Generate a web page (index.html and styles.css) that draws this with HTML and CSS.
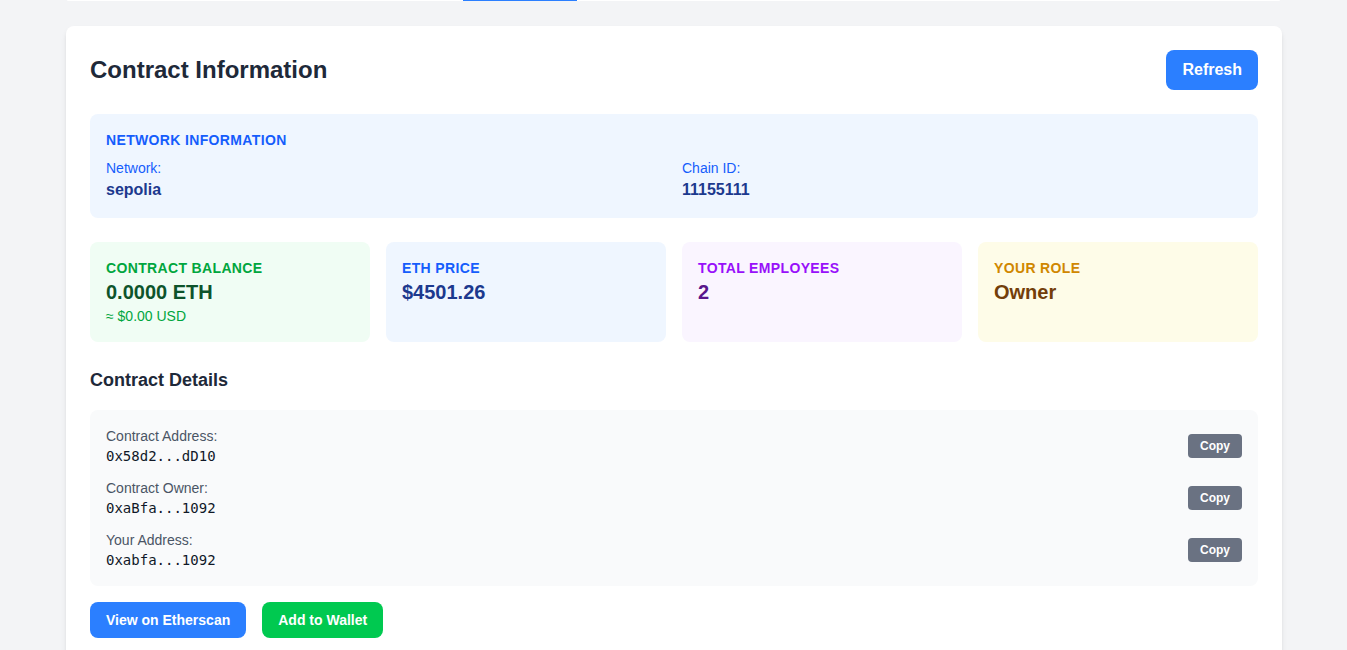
FILE: index.html
```html
<!DOCTYPE html>
<html lang="en">
<head>
<meta charset="utf-8">
<title>Contract Information</title>
<link rel="stylesheet" href="styles.css">
</head>
<body>
<div class="container">
  <div class="nav">
    <div class="nav-spacer"></div>
    <div class="nav-tab-active"></div>
  </div>
  <main class="card">
    <div class="card-header">
      <h1 class="title">Contract Information</h1>
      <button class="btn btn-blue btn-lg">Refresh</button>
    </div>

    <section class="network">
      <div class="network-title">NETWORK INFORMATION</div>
      <div class="network-grid">
        <div>
          <div class="net-label">Network:</div>
          <div class="net-value">sepolia</div>
        </div>
        <div>
          <div class="net-label">Chain ID:</div>
          <div class="net-value">11155111</div>
        </div>
      </div>
    </section>

    <section class="stats">
      <div class="stat stat-green">
        <div class="stat-label">CONTRACT BALANCE</div>
        <div class="stat-value">0.0000 ETH</div>
        <div class="stat-sub">≈ $0.00 USD</div>
      </div>
      <div class="stat stat-blue">
        <div class="stat-label">ETH PRICE</div>
        <div class="stat-value">$4501.26</div>
      </div>
      <div class="stat stat-purple">
        <div class="stat-label">TOTAL EMPLOYEES</div>
        <div class="stat-value">2</div>
      </div>
      <div class="stat stat-yellow">
        <div class="stat-label">YOUR ROLE</div>
        <div class="stat-value">Owner</div>
      </div>
    </section>

    <h2 class="subtitle">Contract Details</h2>
    <section class="details">
      <div class="detail-row">
        <div>
          <div class="detail-label">Contract Address:</div>
          <div class="detail-value">0x58d2...dD10</div>
        </div>
        <button class="btn-copy">Copy</button>
      </div>
      <div class="detail-row">
        <div>
          <div class="detail-label">Contract Owner:</div>
          <div class="detail-value">0xaBfa...1092</div>
        </div>
        <button class="btn-copy">Copy</button>
      </div>
      <div class="detail-row">
        <div>
          <div class="detail-label">Your Address:</div>
          <div class="detail-value">0xabfa...1092</div>
        </div>
        <button class="btn-copy">Copy</button>
      </div>
    </section>

    <div class="actions">
      <button class="btn btn-blue btn-sm">View on Etherscan</button>
      <button class="btn btn-green btn-sm">Add to Wallet</button>
    </div>
  </main>
</div>
</body>
</html>
```

FILE: styles.css
```css
* { box-sizing: border-box; }
html, body { margin: 0; padding: 0; }
body {
  background: #f3f4f6;
  font-family: "Liberation Sans", Arial, sans-serif;
  color: #1e2939;
}
.container {
  width: 1216px;
  margin: 0 0 0 66px;
}
.nav {
  height: 1px;
  background: #fff;
  border-radius: 0 0 8px 8px;
  box-shadow: 0 6px 10px -2px rgba(0,0,0,0.12), 0 2px 4px -1px rgba(0,0,0,0.1);
  display: flex;
  margin: 0 2px 0 1px;
}
.nav-spacer { width: 396px; }
.nav-tab-active { width: 114px; height: 1px; background: #2b7fff; }

.card {
  margin-top: 25px;
  background: #fff;
  border-radius: 8px;
  box-shadow: 0 4px 6px -1px rgba(0,0,0,0.1), 0 2px 4px -2px rgba(0,0,0,0.1);
  padding: 24px 24px 40px;
}
.card-header {
  display: flex;
  justify-content: space-between;
  align-items: center;
  margin-bottom: 24px;
}
.title {
  margin: 0;
  font-size: 24px;
  line-height: 32px;
  font-weight: 700;
  color: #1e2939;
}
.btn {
  border: 0;
  color: #fff;
  font-family: "Liberation Sans", Arial, sans-serif;
  font-weight: 700;
  border-radius: 8px;
  cursor: pointer;
}
.btn-lg { font-size: 16px; line-height: 24px; padding: 8px 16px; }
.btn-sm { font-size: 14px; line-height: 20px; padding: 8px 16px; }
.btn-blue { background: #2b7fff; }
.btn-green { background: #00c950; }

.network {
  background: #eff6ff;
  border-radius: 8px;
  padding: 16px;
  margin-bottom: 24px;
}
.network-title {
  font-size: 14px;
  line-height: 20px;
  font-weight: 700;
  letter-spacing: 0.025em;
  color: #155dfc;
  margin-bottom: 8px;
}
.network-grid {
  display: grid;
  grid-template-columns: 1fr 1fr;
  gap: 16px;
}
.net-label { font-size: 14px; line-height: 20px; color: #155dfc; }
.net-value { font-size: 16px; line-height: 24px; font-weight: 700; color: #1c398e; }

.stats {
  display: grid;
  grid-template-columns: repeat(4, 1fr);
  gap: 16px;
  margin-bottom: 24px;
}
.stat {
  border-radius: 8px;
  padding: 16px;
  min-height: 100px;
}
.stat-label { font-size: 14px; line-height: 20px; font-weight: 700; letter-spacing: 0.025em; }
.stat-value { font-size: 20px; line-height: 28px; font-weight: 700; }
.stat-sub { font-size: 14px; line-height: 20px; }
.stat-green { background: #f0fdf4; }
.stat-green .stat-label, .stat-green .stat-sub { color: #00a63e; }
.stat-green .stat-value { color: #0d542b; }
.stat-blue { background: #eff6ff; }
.stat-blue .stat-label { color: #155dfc; }
.stat-blue .stat-value { color: #1c398e; }
.stat-purple { background: #faf5ff; }
.stat-purple .stat-label { color: #9810fa; }
.stat-purple .stat-value { color: #59168b; }
.stat-yellow { background: #fefce8; }
.stat-yellow .stat-label { color: #d08700; }
.stat-yellow .stat-value { color: #733e0a; }

.subtitle {
  margin: 0 0 16px;
  font-size: 18px;
  line-height: 28px;
  font-weight: 700;
  color: #1e2939;
}
.details {
  background: #f9fafb;
  border-radius: 8px;
  padding: 16px;
  display: flex;
  flex-direction: column;
  gap: 12px;
}
.detail-row {
  display: flex;
  justify-content: space-between;
  align-items: center;
}
.detail-label { font-size: 14px; line-height: 20px; color: #4a5565; }
.detail-value {
  font-family: "DejaVu Sans Mono", "Liberation Mono", monospace;
  font-size: 14px;
  line-height: 20px;
  color: #101828;
}
.btn-copy {
  border: 0;
  background: #6a7282;
  color: #fff;
  font-family: "Liberation Sans", Arial, sans-serif;
  font-size: 12px;
  line-height: 16px;
  font-weight: 700;
  padding: 4px 12px;
  border-radius: 4px;
}
.actions {
  display: flex;
  gap: 16px;
  margin-top: 16px;
}
```
